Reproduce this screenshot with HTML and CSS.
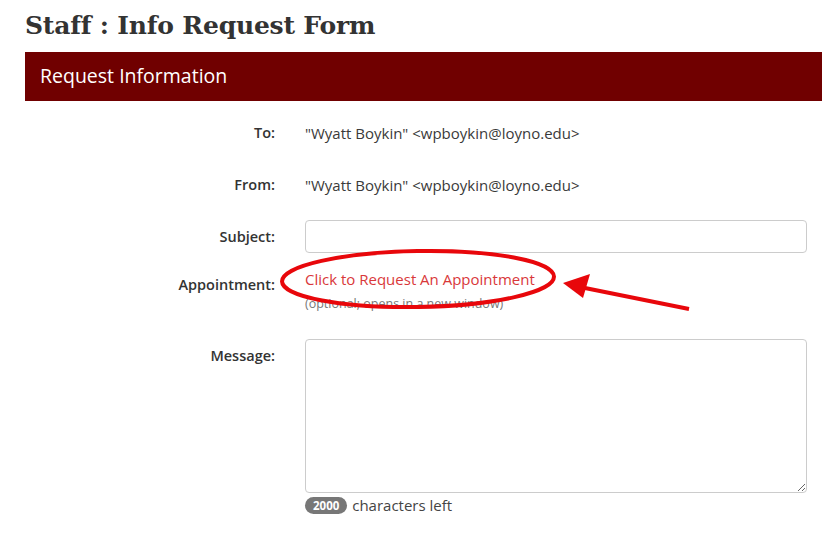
FILE: index.html
```html
<!DOCTYPE html>
<html>
<head>
<meta charset="utf-8">
<link rel="stylesheet" href="styles.css">
</head>
<body>
<div class="page">
  <h1 class="title">Staff : Info Request Form</h1>
  <div class="panel-head">Request Information</div>
  <form class="form">
    <div class="row row-static">
      <label class="label">To:</label>
      <div class="static">"Wyatt Boykin" &lt;wpboykin@loyno.edu&gt;</div>
    </div>
    <div class="row row-static">
      <label class="label">From:</label>
      <div class="static">"Wyatt Boykin" &lt;wpboykin@loyno.edu&gt;</div>
    </div>
    <div class="row row-subject">
      <label class="label">Subject:</label>
      <input class="input" type="text">
    </div>
    <div class="row row-appt">
      <label class="label label-appt">Appointment:</label>
      <div class="appt">
        <a class="link" href="#">Click to Request An Appointment</a>
        <div class="help">(optional; opens in a new window)</div>
      </div>
    </div>
    <div class="row row-msg">
      <label class="label">Message:</label>
      <div class="msg">
        <textarea class="textarea"></textarea>
        <div class="counter"><span class="badge">2000</span> characters left</div>
      </div>
    </div>
  </form>
  <svg class="annot" width="837" height="533" viewBox="0 0 837 533">
    <ellipse cx="418" cy="279" rx="136" ry="28" fill="none" stroke="#e8070b" stroke-width="4" transform="rotate(-1 418 279)"/>
    <line x1="689" y1="309" x2="580" y2="287" stroke="#e8070b" stroke-width="4"/>
    <polygon points="563,283 590,274 583,298" fill="#e8070b"/>
  </svg>
</div>
</body>
</html>
```
FILE: styles.css
```css
* { box-sizing: border-box; }
html, body { margin: 0; padding: 0; background: #fff; }
body {
  font-family: "Open Sans", Lato, sans-serif;
  color: #333;
  font-size: 14px;
}
.page {
  position: relative;
  width: 837px;
  height: 533px;
  overflow: hidden;
  padding: 0 15px 0 25px;
}
.title {
  margin: 0;
  padding-top: 9px;
  height: 52px;
  font-family: "DejaVu Serif", serif;
  font-weight: 900;
  font-size: 25px;
  line-height: 34px;
  color: #333;
  letter-spacing: -0.2px;
}
.panel-head {
  background: #700000;
  color: #fff;
  height: 49px;
  padding: 12px 15px 0 15px;
  font-size: 19.5px;
  line-height: 24px;
}
.form {
  padding-top: 15px;
}
.row {
  display: grid;
  grid-template-columns: 250px 502px;
  column-gap: 30px;
  align-items: start;
}
.label {
  text-align: right;
  font-weight: 600;
  font-size: 14.5px;
  padding-top: 7px;
  line-height: 20px;
  color: #333;
}
.static {
  padding: 7px 0;
  font-size: 15px;
  line-height: 20px;
  color: #3a3a3a;
}
.row-static { margin-bottom: 18px; }
.row-subject { margin-bottom: 16px; }
.input {
  display: block;
  width: 502px;
  height: 33px;
  border: 1px solid #ccc;
  border-radius: 4px;
  font: inherit;
  margin: 0;
}
.label-appt { padding-top: 6px; }
.appt { line-height: 20px; }
.link {
  display: block;
  color: #d9383a;
  text-decoration: none;
  font-size: 15px;
  line-height: 20px;
}
.help {
  margin-top: 7px;
  font-size: 12.5px;
  line-height: 15px;
  color: #777;
}
.row-appt { margin-bottom: 28px; }
.textarea {
  display: block;
  width: 502px;
  height: 154px;
  border: 1px solid #ccc;
  border-radius: 4px;
  margin: 0;
  font: inherit;
  resize: vertical;
}
.counter {
  margin-top: 4px;
  font-size: 15px;
  line-height: 17px;
  color: #444;
}
.badge {
  display: inline-block;
  background: #777;
  color: #fff;
  font-weight: bold;
  font-size: 11.5px;
  line-height: 17px;
  height: 17px;
  padding: 0 8px;
  border-radius: 9px;
  vertical-align: top;
  margin-right: 1px;
}
.annot {
  position: absolute;
  left: 0;
  top: 0;
  pointer-events: none;
}
```
